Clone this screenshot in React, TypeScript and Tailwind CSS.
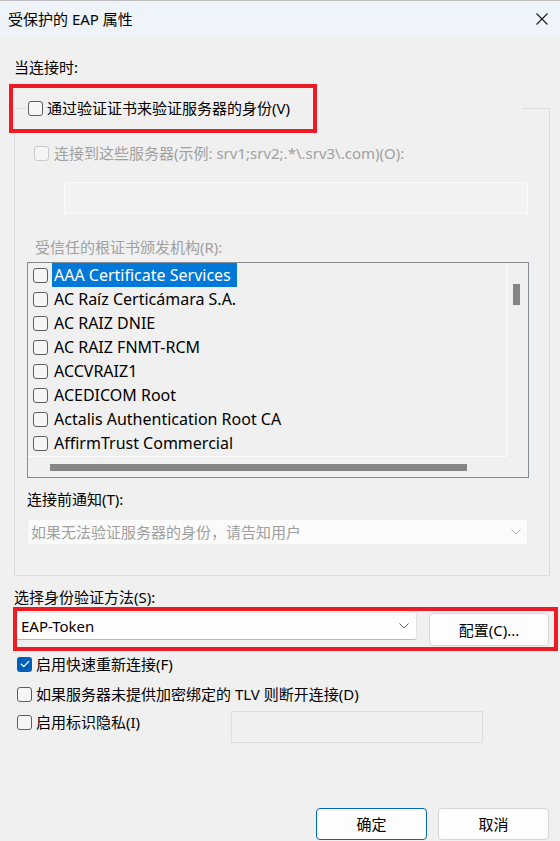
import React from "react";

function Check({ checked = false, disabled = false }: { checked?: boolean; disabled?: boolean }) {
  if (checked) {
    return (
      <span className="inline-flex shrink-0 w-[15px] h-[15px] rounded-[3px] bg-[#005fb8] items-center justify-center">
        <svg width="10" height="8" viewBox="0 0 10 8">
          <path d="M1.2 4.2 L3.8 6.6 L8.8 1.4" stroke="#ffffff" strokeWidth="1.3" fill="none" strokeLinecap="round" strokeLinejoin="round" />
        </svg>
      </span>
    );
  }
  if (disabled) {
    return <span className="inline-block shrink-0 w-[15px] h-[15px] rounded-[3px] border border-[#c8c8c8] bg-[#f5f5f5]" />;
  }
  return <span className="inline-block shrink-0 w-[15px] h-[15px] rounded-[3px] border border-[#5e5e5e] bg-[#f6f6f6]" />;
}

function Chevron({ color }: { color: string }) {
  return (
    <svg width="10" height="6" viewBox="0 0 10 6">
      <path d="M0.5 0.5 L5 5 L9.5 0.5" stroke={color} strokeWidth="1" fill="none" />
    </svg>
  );
}

const items = [
  "AAA Certificate Services",
  "AC Raíz Certicámara S.A.",
  "AC RAIZ DNIE",
  "AC RAIZ FNMT-RCM",
  "ACCVRAIZ1",
  "ACEDICOM Root",
  "Actalis Authentication Root CA",
  "AffirmTrust Commercial",
];

export default function App() {
  return (
    <div className="relative w-[560px] h-[841px] overflow-hidden bg-[#f0f0f0] text-[15px] leading-[20px] text-[#000000] font-['Noto_Sans','Noto_Sans_CJK_SC',sans-serif]">
      {/* Title bar */}
      <div className="h-[37px] bg-[#eef4f9] border-t border-[#bdbdbd] flex items-center justify-between pl-[8px] pr-[12px]">
        <span>受保护的 EAP 属性</span>
        <svg width="12" height="12" viewBox="0 0 12 12">
          <path d="M0.5 0.5 L11.5 11.5 M11.5 0.5 L0.5 11.5" stroke="#1a1a1a" strokeWidth="1.1" />
        </svg>
      </div>

      <div className="ml-[14px] mt-[20px]">当连接时:</div>

      <fieldset className="ml-[14px] mt-[21px] w-[536px] border border-[#dcdcdc] pb-[30px]">
        <legend className="ml-[11px] w-[496px] h-[20px]">
          <div className="flex items-center gap-[4px] pl-[2px] h-[20px]">
            <Check />
            <span>通过验证证书来验证服务器的身份(V)</span>
          </div>
        </legend>
        <div className="ml-[12px] w-[501px]">
          <div className="mt-[25px] ml-[7px] h-[20px] flex items-center gap-[5px] text-[#a0a0a0]">
            <Check disabled />
            <span>连接到这些服务器(示例: srv1;srv2;.*\.srv3\.com)(O):</span>
          </div>
          <div className="mt-[19px] ml-[37px] w-[464px] h-[32px] border border-[#fafafa] bg-[#f2f2f2]" />
          <div className="mt-[23px] ml-[8px] h-[20px] text-[#a0a0a0]">受信任的根证书颁发机构(R):</div>

          {/* List box */}
          <div className="mt-[5px] w-[502px] h-[216px] border border-[#868a91] flex flex-col">
            <div className="flex h-[194px]">
              <div className="w-[479px] h-[194px] border-r border-b border-[#fbfbfb] text-[16px] leading-[24px]">
                {items.map((t, i) => (
                  <div key={t} className="h-[24px] flex items-center pl-[5px] gap-[4px]">
                    <Check />
                    <span
                      className={
                        i === 0
                          ? "bg-[#0078d7] text-white pl-[2px] pr-[6px] h-[24px] flex items-center"
                          : "pl-[2px] pr-[6px] h-[24px] flex items-center"
                      }
                    >
                      {t}
                    </span>
                  </div>
                ))}
              </div>
              <div className="flex-1">
                <div className="ml-[6px] mt-[21px] w-[7px] h-[21px] bg-[#858585]" />
              </div>
            </div>
            <div className="flex-1">
              <div className="ml-[22px] mt-[7px] w-[417px] h-[7px] bg-[#858585]" />
            </div>
          </div>

          <div className="mt-[11px] h-[20px]">连接前通知(T):</div>
          <div className="mt-[10px] w-[501px] h-[26px] bg-[#fbfbfb] border border-[#ececec] rounded-[2px] flex items-center justify-between pl-[3px] pr-[6px] text-[#a0a0a0]">
            <span>如果无法验证服务器的身份，请告知用户</span>
            <Chevron color="#b4b4b4" />
          </div>
        </div>
      </fieldset>

      <div className="ml-[14px] mt-[11px] h-[20px]">选择身份验证方法(S):</div>
      <div className="ml-[14px] mt-[5px] flex items-start">
        <div className="w-[403px] h-[28px] bg-white border border-[#e3e3e3] border-b-[#b8b8b8] rounded-[3px] flex items-center justify-between pl-[6px] pr-[7px]">
          <span>EAP-Token</span>
          <Chevron color="#606060" />
        </div>
        <div className="ml-[12px] mt-[1px] w-[120px] h-[33px] bg-[#fdfdfd] border border-[#d6d6d6] rounded-[4px] flex items-center justify-center">
          配置(C)...
        </div>
      </div>

      <div className="ml-[17px] mt-[8px] h-[20px] flex items-center gap-[4px]">
        <Check checked />
        <span>启用快速重新连接(F)</span>
      </div>
      <div className="ml-[17px] mt-[10px] h-[20px] flex items-center gap-[4px]">
        <Check />
        <span>如果服务器未提供加密绑定的 TLV 则断开连接(D)</span>
      </div>
      <div className="ml-[17px] mt-[7px] flex items-start">
        <div className="w-[214px] mt-[1px] h-[20px] flex items-center gap-[4px]">
          <Check />
          <span>启用标识隐私(I)</span>
        </div>
        <div className="w-[252px] h-[32px] border border-[#dddddd] bg-[#f0f0f0]" />
      </div>

      <div className="mt-[65px] flex justify-end pr-[11px] gap-[11px]">
        <div className="w-[111px] h-[32px] bg-[#fdfdfd] border border-[#0067c0] rounded-[4px] flex items-center justify-center">
          确定
        </div>
        <div className="w-[111px] h-[32px] bg-[#fdfdfd] border border-[#d6d6d6] rounded-[4px] flex items-center justify-center">
          取消
        </div>
      </div>

      {/* Red annotation boxes */}
      <div className="absolute left-[9px] top-[84px] w-[308px] h-[49px] border-4 border-[#ed1c24]" />
      <div className="absolute left-[13px] top-[607px] w-[545px] h-[44px] border-4 border-[#ed1c24]" />
    </div>
  );
}
